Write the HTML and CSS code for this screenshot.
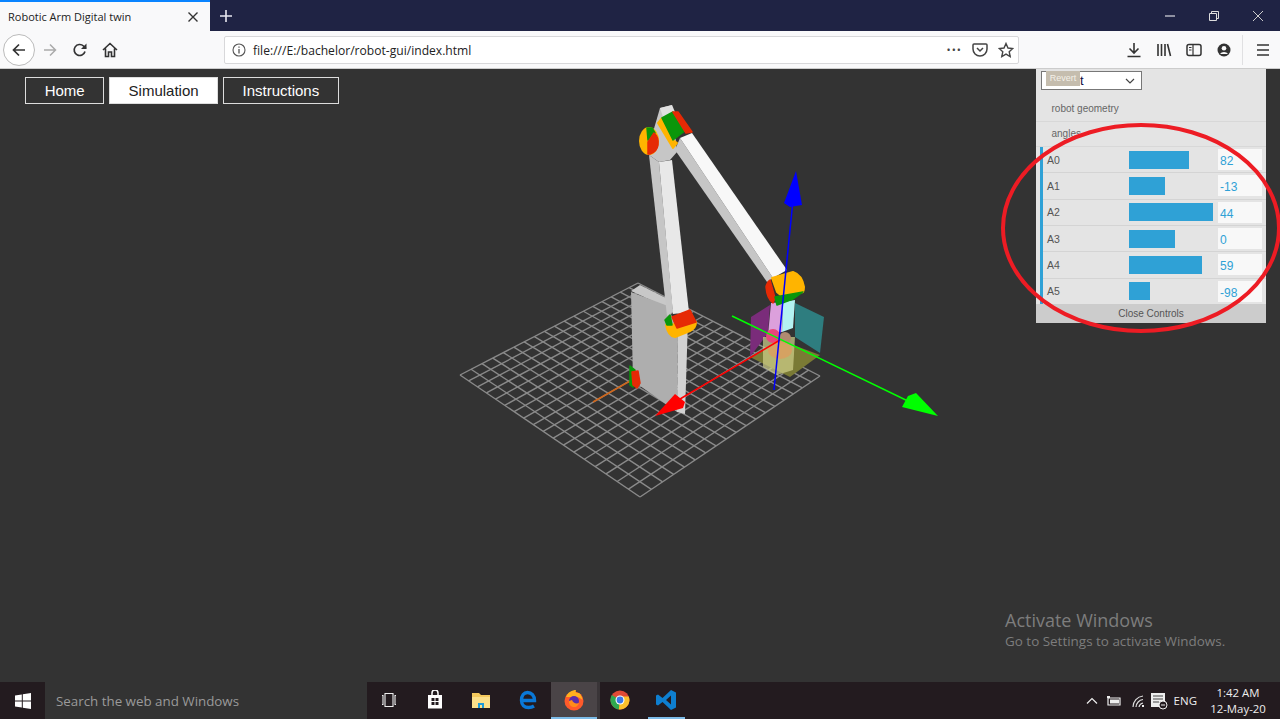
FILE: index.html
```html
<!DOCTYPE html>
<html lang="en">
<head>
<meta charset="utf-8">
<title>Robotic Arm Digital twin</title>
<link rel="stylesheet" href="styles.css">
</head>
<body>
<header class="titlebar">
  <div class="tab">
    <span class="tab-title">Robotic Arm Digital twin</span>
    <svg class="ico12" viewBox="0 0 12 12"><path d="M1.5 1.5l9 9M10.5 1.5l-9 9" stroke="#333" stroke-width="1.4"/></svg>
  </div>
  <svg class="newtab" viewBox="0 0 14 14"><path d="M7 1v12M1 7h12" stroke="#e8e8f0" stroke-width="1.6"/></svg>
  <div class="winctl">
    <svg class="ico12" viewBox="0 0 12 12"><path d="M1 6h10" stroke="#fff" stroke-width="1"/></svg>
    <svg class="ico12" viewBox="0 0 12 12"><path d="M1.5 3.5h7v7h-7zM3.5 3.5v-2h7v7h-2" fill="none" stroke="#ddd" stroke-width="1"/></svg>
    <svg class="ico12" viewBox="0 0 12 12"><path d="M1 1l10 10M11 1L1 11" stroke="#ccc" stroke-width="1"/></svg>
  </div>
</header>
<nav class="toolbar">
  <div class="navbtns">
    <span class="backbtn"><svg class="ico16" viewBox="0 0 16 16"><path d="M14 8H2.5M8 2.5L2.5 8 8 13.500" fill="none" stroke="#333" stroke-width="1.700"/></svg></span>
    <svg class="ico16 fwd" viewBox="0 0 16 16"><path d="M2 8h11.500M8 2.500L13.500 8 8 13.500" fill="none" stroke="#aaa" stroke-width="1.500"/></svg>
    <svg class="ico16 reload" viewBox="0 0 16 16"><path d="M13 9.500A5.500 5.500 0 1 1 11.500 4L14 6.500" fill="none" stroke="#333" stroke-width="1.700"/><path d="M14.500 1.500v5.500H9z" fill="#333"/></svg>
    <svg class="ico16 home" viewBox="0 0 16 16"><path d="M1 8l7-6.500L15 8M3.500 6.500V14.500h3V10h3v4.500h3V6.500" fill="none" stroke="#333" stroke-width="1.600"/></svg>
  </div>
  <div class="urlbar">
    <svg class="ico14" viewBox="0 0 14 14"><circle cx="7" cy="7" r="6" fill="none" stroke="#555" stroke-width="1.100"/><path d="M7 6v4.500M7 3.500v1.300" stroke="#555" stroke-width="1.300"/></svg>
    <span class="url">file:///E:/bachelor/robot-gui/index.html</span>
    <span class="dots">•••</span>
    <svg class="ico16" viewBox="0 0 16 16"><path d="M2 2h12a1 1 0 0 1 1 1v4a7 7 0 0 1-14 0V3a1 1 0 0 1 1-1z" fill="none" stroke="#444" stroke-width="1.500"/><path d="M5 6l3 3 3-3" fill="none" stroke="#444" stroke-width="1.500"/></svg>
    <svg class="ico16" viewBox="0 0 16 16"><path d="M8 1.500l2 4.500 4.800.5-3.600 3.200 1 4.800L8 12.100 3.800 14.500l1-4.800L1.200 6.500 6 6z" fill="none" stroke="#444" stroke-width="1.400"/></svg>
  </div>
  <div class="tools">
    <svg class="ico16" viewBox="0 0 16 16"><path d="M8 1v10M3.500 6.500L8 11l4.500-4.500M1.500 14.500h13" fill="none" stroke="#333" stroke-width="1.600"/></svg>
    <svg class="ico16" viewBox="0 0 16 16"><path d="M2 2v12M5.500 2v12M9 2v12M11.500 2l3 12" fill="none" stroke="#333" stroke-width="1.600"/></svg>
    <svg class="ico16" viewBox="0 0 16 16"><rect x="1" y="2.500" width="14" height="11" rx="2" fill="none" stroke="#333" stroke-width="1.500"/><path d="M7 2.500v11M3 5.500h2.500M3 8h2.500" stroke="#333" stroke-width="1.200"/></svg>
    <svg class="ico16" viewBox="0 0 16 16"><circle cx="8" cy="8" r="6.500" fill="#333"/><circle cx="8" cy="6.300" r="2.300" fill="#f9f9fa"/><path d="M4 12a4.500 3.500 0 0 1 8 0z" fill="#f9f9fa"/></svg>
    <span class="tooldiv"></span>
    <svg class="ico16" viewBox="0 0 16 16"><path d="M2 3h12M2 8h12M2 13h12" stroke="#333" stroke-width="1.600"/></svg>
  </div>
</nav>
<main class="page">
  <svg class="scene" viewBox="0 69 1280 613">
    <g id="grid" class="grid"></g>
    <line class="ax-orange" x1="593" y1="402" x2="630" y2="381"/>
    <polygon class="glass-floor" points="750,357 780,340 820,355 790,377"/>
    <polygon class="glass-purple" points="751,317 770,305 768,333 750,357"/>
    <polygon class="glass-teal" points="795,303 824,317 820,353 795,337"/>
    <polygon class="base-top" points="631,291 640,285 668,299 668,308"/>
    <polygon class="base-face" points="631,292 668,306 678,333 677,412 633,381"/>
    <polygon class="base-side" points="678,330 688,318 685,414 677,412"/>
    <polygon class="green" points="630,366 635,370 633,387 630,385"/>
    <polygon class="red" points="632,372 638,371 640,383 637,388 633,385"/>
    <polygon class="grey-d" points="649,155 653,132 660,108 672,105 677,152 670,160 659,162"/>
    <polygon class="grey-l" points="660,108 672,105 675,112 663,117"/>
    <polygon class="grey-d" points="649,155 659,162 673,312 667,316"/>
    <polygon class="white-l" points="659,162 672,160 689,312 673,314"/>
    <ellipse class="yellow" cx="649" cy="141" rx="9" ry="13"/>
    <polygon class="green" points="647,128 652,128 655,133 648,140"/>
    <path class="red" d="M648 154L648 142L654 133Q659 137 658 145Q657 152 650 154Z"/>
    <polygon class="grey-d" points="675,150 680,138 773,278 767,282"/>
    <polygon class="white" points="680,138 692,133 787,270 773,278"/>
    <polygon class="yellow" points="658,123 662,118 673,140 677,143 673,148"/>
    <polygon class="green" points="662,118 673,112 686,130 673,140"/>
    <polygon class="red" points="673,112 678,112 692,132 686,133"/>
    <path class="yellow" d="M666 325L696 322Q696 328 690 331L675 337Q668 336 666 325Z"/>
    <polygon class="red" points="672,317 690,310 696,322 677,328"/>
    <polygon class="green" points="665,320 670,315 672,325 667,325"/>
    <polygon class="pink" points="771,303 783,302 782,332 768,335"/>
    <polygon class="cyan" points="783,302 795,300 793,328 782,332"/>
    <polygon class="glass-col" points="763,337 795,337 793,370 777,375 763,367"/>
    <path class="yellow" d="M772 278L793 272Q802 275 804 287Q804 290 803 292L783 297L777 292Z"/>
    <path class="red" d="M766 287Q767 282 770 280L775 298L773 303Q767 299 766 287Z"/>
    <polygon class="green" points="775,297 803,292 793,299 777,305"/>
    <circle class="ball-pink" cx="773" cy="336" r="7"/>
    <circle class="ball-tan" cx="785" cy="338" r="6"/>
    <ellipse class="ball-orange" cx="780" cy="350" rx="12" ry="9"/>
    <line class="ax-green" x1="732" y1="316" x2="912" y2="403"/>
    <line class="ax-red" x1="780" y1="340" x2="680" y2="399"/>
    <line class="ax-blue" x1="774" y1="390" x2="793" y2="200"/>
    <polygon class="cone-red" points="655,416 675,394 685,402 683,408"/>
    <polygon class="cone-blue" points="796,171 784,203 790,207 802,205"/>
    <polygon class="cone-green" points="938,416 902,407 908,396 916,393"/>
  </svg>

  <div class="tabs">
    <a class="tablink">Home</a>
    <a class="tablink active">Simulation</a>
    <a class="tablink">Instructions</a>
  </div>

  <aside class="gui">
    <div class="presets">
      <div class="select">
        <span class="sel-text">t</span>
        <svg class="chev" viewBox="0 0 10 6"><path d="M1 1l4 4 4-4" fill="none" stroke="#444" stroke-width="1.200"/></svg>
        <span class="revert">Revert</span>
      </div>
    </div>
    <div class="folder">robot geometry</div>
    <div class="folder">angles</div>
    <div class="sliders">
      <div class="row"><span class="lbl">A0</span><span class="track"><i class="fill" style="width:60px"></i></span><span class="val">82</span></div>
      <div class="row"><span class="lbl">A1</span><span class="track"><i class="fill" style="width:36px"></i></span><span class="val">-13</span></div>
      <div class="row"><span class="lbl">A2</span><span class="track"><i class="fill" style="width:84px"></i></span><span class="val">44</span></div>
      <div class="row"><span class="lbl">A3</span><span class="track"><i class="fill" style="width:46px"></i></span><span class="val">0</span></div>
      <div class="row"><span class="lbl">A4</span><span class="track"><i class="fill" style="width:73px"></i></span><span class="val">59</span></div>
      <div class="row"><span class="lbl">A5</span><span class="track"><i class="fill" style="width:21px"></i></span><span class="val">-98</span></div>
    </div>
    <div class="close">Close Controls</div>
  </aside>

  <svg class="annot" viewBox="0 0 290 225"><ellipse cx="141" cy="106" rx="138" ry="103" fill="none" stroke="#ed1c24" stroke-width="4"/></svg>

  <div class="watermark">
    <div class="wm1">Activate Windows</div>
    <div class="wm2">Go to Settings to activate Windows.</div>
  </div>
</main>
<footer class="taskbar">
  <div class="start"><svg class="ico16" viewBox="0 0 16 16"><path d="M0 2.500l6.800-1v6H0zM7.800 1.300L16 0v7.500H7.800zM0 8.500h6.800v6l-6.800-1zM7.800 8.500H16V16l-8.200-1.200z" fill="#fff"/></svg></div>
  <div class="search">Search the web and Windows</div>
  <div class="apps">
    <span class="app"><svg class="ico18" viewBox="0 0 18 18"><path d="M5 2.500h8v13H5zM2 4.500h1v9H2M16 4.500h-1v9h1" fill="none" stroke="#eee" stroke-width="1.100"/></svg></span>
    <span class="app"><svg class="ico20" viewBox="0 0 20 20"><path d="M3 5h14v13.500H3z" fill="#fff"/><path d="M7 6V3a3 3 0 0 1 6 0v3" fill="none" stroke="#fff" stroke-width="1.500"/><path d="M6.500 8h3v3h-3zM10.500 8h3v3h-3zM6.500 12h3v3h-3zM10.500 12h3v3h-3z" fill="#231b1f"/></svg></span>
    <span class="app"><svg class="ico20" viewBox="0 0 20 20"><path d="M1 3h7l2 2h9v13H1z" fill="#f4c95d"/><path d="M1 7h18v11H1z" fill="#fbe08a"/><path d="M7 18v-5h6v5h-2v-3H9v3z" fill="#1e9bd7"/></svg></span>
    <span class="app"><svg class="ico20" viewBox="0 0 20 20"><path d="M3.500 10.500h13c0-5-3-8-7-8-3.500 0-6 3-6 8 0 4.500 3 7 7 7 2 0 4-.5 5.500-1.500" fill="none" stroke="#0a78d7" stroke-width="3.400"/></svg></span>
    <span class="app on"><svg class="ico22" viewBox="0 0 22 22"><circle cx="11" cy="12" r="9.500" fill="#ff5a2b"/><path d="M3 8C5 3 9 1 13 1c-1 3 1 3 3 3 2 1.500 3 4 3.500 7-2-2-4-3-7-3z" fill="#ffb01f"/><circle cx="11" cy="12" r="5" fill="#5b2ea8"/><path d="M6 12a5 5 0 0 0 10 2c-3 1-6 0-7-3z" fill="#ff8c1a"/></svg></span>
    <span class="app"><svg class="ico20" viewBox="0 0 20 20"><circle cx="10" cy="10" r="9.500" fill="#e04a36"/><path d="M10 10L1.800 5a9.500 9.500 0 0 0 7 14.400z" fill="#2fa84f"/><path d="M10 10l-1.200 9.400A9.500 9.500 0 0 0 18.800 6.500H10z" fill="#fbc02d"/><circle cx="10" cy="10" r="4.500" fill="#fff"/><circle cx="10" cy="10" r="3.400" fill="#3b78e7"/></svg></span>
    <span class="app mark"><svg class="ico22" viewBox="0 0 22 22"><path d="M16 1l5 2.500v15L16 21 7.500 13 3 16.500 1 15.500v-9l2-1L7.500 9zM16 6.500L11 11l5 4.500z" fill="#0e7fd0"/></svg></span>
  </div>
  <div class="tray">
    <svg class="ico12" viewBox="0 0 12 12"><path d="M1 8.500L6 3.500l5 5" fill="none" stroke="#eee" stroke-width="1.200"/></svg>
    <svg class="ico16" viewBox="0 0 16 16"><path d="M2 5h12v7H2z" fill="none" stroke="#eee" stroke-width="1.200"/><path d="M4 6.500h9v4H4zM1 3h3v2H1z" fill="#eee"/></svg>
    <svg class="ico16" viewBox="0 0 16 16"><path d="M3 14a11 11 0 0 1 10-11M6 14a8 8 0 0 1 7-7.500M9 14a5 5 0 0 1 4-4" fill="none" stroke="#ddd" stroke-width="1.200"/><path d="M12 12h2v2h-2z" fill="#eee"/></svg>
    <svg class="ico18 notif" viewBox="0 0 18 18"><path d="M1 1h14v14H1z" fill="#eee"/><path d="M3 4h10M3 7h10M3 10h6" stroke="#444" stroke-width="1"/><circle cx="13" cy="13" r="4" fill="#231b1f" stroke="#eee"/><path d="M11 13h4" stroke="#eee"/></svg>
    <span class="lang">ENG</span>
    <span class="clock"><span>1:42 AM</span><span>12-May-20</span></span>
  </div>
</footer>
<script src="grid.js"></script>
</body>
</html>
```

FILE: styles.css
```css
* { box-sizing: border-box; }
html, body { margin: 0; height: 100%; }
body { display: flex; flex-direction: column; height: 719px; overflow: hidden; font-family: "Open Sans", "Liberation Sans", sans-serif; background: #333; }
svg { display: block; flex: none; }
.ico12 { width: 12px; height: 12px; }
.ico14 { width: 14px; height: 14px; }
.ico16 { width: 16px; height: 16px; }
.ico18 { width: 18px; height: 18px; }
.ico20 { width: 20px; height: 20px; }
.ico22 { width: 22px; height: 22px; }

.titlebar { height: 31px; flex: none; background: #1f2344; display: flex; align-items: center; }
.tab { width: 210px; height: 31px; background: #f9f9fa; border-top: 2px solid #0a84ff; display: flex; align-items: center; justify-content: space-between; padding: 0 11px 0 8px; }
.tab-title { font-size: 11px; color: #222; white-space: nowrap; }
.newtab { width: 14px; height: 14px; margin-left: 9px; }
.winctl { margin-left: auto; display: flex; gap: 32px; padding-right: 16px; }

.toolbar { height: 38px; flex: none; background: #f9f9fa; border-bottom: 1px solid #ccc; display: flex; align-items: center; }
.navbtns { width: 224px; flex: none; display: flex; align-items: center; padding-left: 3px; }
.backbtn { width: 32px; height: 32px; border: 1px solid #bbb; border-radius: 50%; background: #fff; display: flex; align-items: center; justify-content: center; }
.fwd { margin-left: 7px; }
.reload { margin-left: 14px; }
.home { margin-left: 14px; }
.urlbar { width: 795px; height: 28px; flex: none; background: #fff; border: 1px solid #d8d8da; border-radius: 2px; display: flex; align-items: center; padding: 0 4px 0 7px; }
.url { font-size: 12.1px; color: #222; margin-left: 7px; padding-top: 1px; white-space: nowrap; }
.dots { margin-left: auto; margin-right: 10px; font-size: 11px; color: #444; letter-spacing: 1px; }
.urlbar .ico16 + .ico16 { margin-left: 10px; }
.tools { flex: 1; display: flex; align-items: center; padding-left: 107px; gap: 14px; }
.tooldiv { width: 1px; height: 30px; background: #e0e0e2; margin-left: -4px; margin-right: -2px; }

.page { position: relative; flex: 1; background: #333; overflow: hidden; }
.scene { position: absolute; left: 0; top: 0; width: 1280px; height: 613px; filter: blur(.4px); }
.grid line { stroke: #8a8a8a; stroke-width: 1.400; }
.base-top { fill: #c8c8c8; }
.base-face { fill: #aeaeae; }
.base-side { fill: #d2d2d2; }
.grey-d { fill: #c6c6c6; }
.grey-l { fill: #e0e0e0; }
.white-l { fill: #e8e8e8; }
.white { fill: #f8f8f8; }
.yellow { fill: #ffb400; stroke: #ffb400; stroke-width: 2; stroke-linejoin: round; }
.green { fill: #0a960a; stroke: #0a960a; stroke-width: 1.500; stroke-linejoin: round; }
.red { fill: #e62a05; stroke: #e62a05; stroke-width: 1.500; stroke-linejoin: round; }
.pink { fill: #dca0dc; }
.cyan { fill: #b4f2f2; }
.glass-floor { fill: #7a7a35; }
.glass-purple { fill: #7a2c7a; }
.glass-teal { fill: #2e7d7f; }
.glass-col { fill: #d2d28c; opacity: .7; }
.ball-pink { fill: #e8457a; }
.ball-tan { fill: #b08a70; }
.ball-orange { fill: #d8a060; opacity: .9; }
.ax-green { stroke: #0f0; stroke-width: 1.500; }
.ax-red { stroke: #f00; stroke-width: 1.500; }
.ax-blue { stroke: #00f; stroke-width: 1.500; }
.ax-orange { stroke: #d0661a; stroke-width: 1.500; }
.cone-red { fill: #f00; }
.cone-blue { fill: #00f; }
.cone-green { fill: #0f0; }

.tabs { position: relative; display: flex; gap: 4.500px; padding: 8px 0 0 25px; }
.tablink { height: 27px; display: flex; align-items: center; padding: 0 18.700px; border: 1px solid #ddd; color: #fff; font: 15px/1 "Liberation Sans", Arial, sans-serif; }
.tablink.active { background: #fff; color: #222; }

.gui { position: absolute; right: 14px; top: 0; width: 230px; height: 254px; background: #e4e4e4; display: flex; flex-direction: column; font: 10px "Liberation Sans", Arial, sans-serif; color: #555; }
.presets { height: 27px; flex: none; padding: 2px 0 0 5px; }
.select { position: relative; width: 101px; height: 19px; background: #fff; border: 1px solid #777; display: flex; align-items: center; justify-content: space-between; padding: 0 6px 0 38px; }
.sel-text { font-size: 13px; color: #111144; }
.chev { width: 10px; height: 6px; }
.revert { position: absolute; left: 4px; top: -1px; width: 34px; height: 15px; background: #c5bdae; color: #f4f0e8; font-size: 9px; line-height: 14px; text-align: center; }
.folder { height: 25.500px; flex: none; padding: 0 0 0 15.500px; display: flex; align-items: center; border-bottom: 1px solid #d8d8d8; color: #666; }
.sliders { flex: 1; margin-left: 4px; border-left: 3px solid #2fa1d6; display: flex; flex-direction: column; }
.row { flex: 1; display: flex; align-items: center; border-bottom: 1px solid #d4d4d4; padding-left: 4px; }
.row:last-child { border-bottom: 0; }
.lbl { width: 82px; flex: none; font-size: 10.500px; }
.track { width: 89px; flex: none; height: 18px; }
.fill { display: block; height: 18px; background: #2fa1d6; }
.val { width: 44px; height: 21px; flex: none; background: #f8f8f8; color: #2fa1d6; font-size: 12px; line-height: 25px; padding-left: 2px; overflow: hidden; }
.close { height: 19px; flex: none; background: #ccc; text-align: center; line-height: 19px; color: #555; font-size: 10px; }

.annot { position: absolute; left: 1000px; top: 53px; width: 290px; height: 225px; overflow: visible; }

.watermark { position: absolute; left: 1005px; top: 539px; color: #7d7d7d; }
.wm1 { font-size: 18px; line-height: 24px; }
.wm2 { font-size: 13.450px; line-height: 19px; }

.taskbar { height: 37px; flex: none; background: #231b1f; display: flex; align-items: stretch; color: #eee; }
.start { width: 45px; flex: none; display: flex; align-items: center; justify-content: center; }
.search { width: 322px; flex: none; background: #333; color: #9a9a9a; font-size: 13.350px; display: flex; align-items: center; padding-left: 11px; }
.apps { display: flex; margin-left: -1px; }
.app { width: 46.200px; display: flex; align-items: center; justify-content: center; border-bottom: 2px solid transparent; }
.app.on { background: #4a4447; border-bottom-color: #7dbce8; box-shadow: 3px 0 0 #3a3538; }
.app.mark { background: linear-gradient(#7dbce8, #7dbce8) center bottom / 37px 2px no-repeat; border-bottom: 0; padding-bottom: 2px; }
.tray { margin-left: auto; display: flex; align-items: center; gap: 8px; padding-right: 6px; }
.notif { margin-left: -4px; }
.lang { font-size: 11.500px; margin: 0 -3px 0 -2px; }
.clock { display: flex; flex-direction: column; align-items: center; font-size: 11.400px; line-height: 16px; width: 72px; }
```

FILE: grid.js
```js
(function () {
  var NS = "http://www.w3.org/2000/svg";
  var g = document.getElementById("grid");
  var q = [[460, 375], [638, 283], [820, 376], [640, 497]];
  var dx1 = q[1][0] - q[2][0], dx2 = q[3][0] - q[2][0], sx = q[0][0] - q[1][0] + q[2][0] - q[3][0];
  var dy1 = q[1][1] - q[2][1], dy2 = q[3][1] - q[2][1], sy = q[0][1] - q[1][1] + q[2][1] - q[3][1];
  var d = dx1 * dy2 - dx2 * dy1;
  var a13 = (sx * dy2 - dx2 * sy) / d, a23 = (dx1 * sy - sx * dy1) / d;
  function map(u, v) {
    var w = a13 * u + a23 * v + 1;
    return [
      ((q[1][0] - q[0][0] + a13 * q[1][0]) * u + (q[3][0] - q[0][0] + a23 * q[3][0]) * v + q[0][0]) / w,
      ((q[1][1] - q[0][1] + a13 * q[1][1]) * u + (q[3][1] - q[0][1] + a23 * q[3][1]) * v + q[0][1]) / w
    ];
  }
  function seg(a, b) {
    var l = document.createElementNS(NS, "line");
    l.setAttribute("x1", a[0]); l.setAttribute("y1", a[1]);
    l.setAttribute("x2", b[0]); l.setAttribute("y2", b[1]);
    g.appendChild(l);
  }
  var n = 18;
  for (var i = 0; i <= n; i++) {
    seg(map(i / n, 0), map(i / n, 1));
    seg(map(0, i / n), map(1, i / n));
  }
})();
```
